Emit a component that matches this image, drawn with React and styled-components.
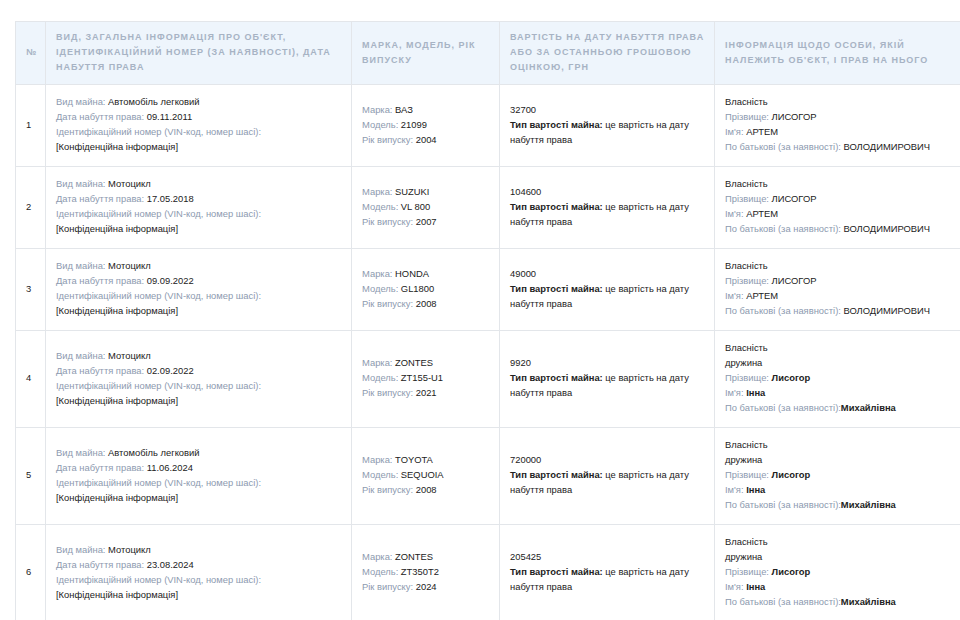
import React from "react";
import styled, { createGlobalStyle } from "styled-components";

const Global = createGlobalStyle`
  html, body { margin: 0; padding: 0; background: #fff; }
  body { overflow: hidden; font-family: "Liberation Sans", Arial, sans-serif; }
`;

const Page = styled.div`
  padding: 21px 0 0 15px;
  width: 1100px;
`;

const Table = styled.table`
  border-collapse: collapse;
  table-layout: fixed;
  width: 966px;
  border: 1px solid #e3e6ea;
`;

const Head = styled.th`
  background: #eef5fc;
  border: 1px solid #e3e6ea;
  padding: 8px 10px 9px;
  text-align: left;
  vertical-align: middle;
  font-size: 9px;
  line-height: 15px;
  font-weight: 700;
  letter-spacing: 1px;
  text-transform: uppercase;
  white-space: nowrap;
  color: #a7b3c4;
`;

const Cell = styled.td`
  border: 1px solid #e3e6ea;
  padding: 9px 10px 12px;
  vertical-align: middle;
  font-size: 9.4px;
  line-height: 15px;
  color: #222;
`;

const Line = styled.div`
  white-space: ${(p) => (p.$nowrap ? "nowrap" : "normal")};
`;

const Label = styled.span`
  color: #8d9aaf;
`;

const Value = styled.span`
  color: #222;
  font-weight: ${(p) => (p.$bold ? 700 : 400)};
`;

const Strong = styled.b`
  font-weight: 700;
  color: #222;
`;

const rows = [
  { n: 1, kind: "Автомобіль легковий", date: "09.11.2011", brand: "ВАЗ", model: "21099", year: "2004", cost: "32700", owner: "self" },
  { n: 2, kind: "Мотоцикл", date: "17.05.2018", brand: "SUZUKI", model: "VL 800", year: "2007", cost: "104600", owner: "self" },
  { n: 3, kind: "Мотоцикл", date: "09.09.2022", brand: "HONDA", model: "GL1800", year: "2008", cost: "49000", owner: "self" },
  { n: 4, kind: "Мотоцикл", date: "02.09.2022", brand: "ZONTES", model: "ZT155-U1", year: "2021", cost: "9920", owner: "wife" },
  { n: 5, kind: "Автомобіль легковий", date: "11.06.2024", brand: "TOYOTA", model: "SEQUOIA", year: "2008", cost: "720000", owner: "wife" },
  { n: 6, kind: "Мотоцикл", date: "23.08.2024", brand: "ZONTES", model: "ZT350T2", year: "2024", cost: "205425", owner: "wife" },
];

function Owner({ type }) {
  if (type === "self") {
    return (
      <>
        <Line>Власність</Line>
        <Line><Label>Прізвище: </Label><Value>ЛИСОГОР</Value></Line>
        <Line><Label>Ім'я: </Label><Value>АРТЕМ</Value></Line>
        <Line $nowrap><Label>По батькові (за наявності): </Label><Value>ВОЛОДИМИРОВИЧ</Value></Line>
      </>
    );
  }
  return (
    <>
      <Line>Власність</Line>
      <Line>дружина</Line>
      <Line><Label>Прізвище: </Label><Value $bold>Лисогор</Value></Line>
      <Line><Label>Ім'я: </Label><Value $bold>Інна</Value></Line>
      <Line $nowrap><Label>По батькові (за наявності):</Label><Value $bold>Михайлівна</Value></Line>
    </>
  );
}

export default function App() {
  return (
    <Page>
      <Global />
      <Table>
        <colgroup>
          <col style={{ width: 30 }} />
          <col style={{ width: 306 }} />
          <col style={{ width: 148 }} />
          <col style={{ width: 215 }} />
          <col style={{ width: 267 }} />
        </colgroup>
        <thead>
          <tr>
            <Head>№</Head>
            <Head>
              Вид, загальна інформація про об'єкт,<br />
              ідентифікаційний номер (за наявності), дата<br />
              набуття права
            </Head>
            <Head>
              Марка, модель, рік<br />
              випуску
            </Head>
            <Head>
              Вартість на дату набуття права<br />
              або за останньою грошовою<br />
              оцінкою, грн
            </Head>
            <Head>
              Інформація щодо особи, якій<br />
              належить об'єкт, і прав на нього
            </Head>
          </tr>
        </thead>
        <tbody>
          {rows.map((r) => (
            <tr key={r.n}>
              <Cell>{r.n}</Cell>
              <Cell>
                <Line><Label>Вид майна: </Label><Value>{r.kind}</Value></Line>
                <Line><Label>Дата набуття права: </Label><Value>{r.date}</Value></Line>
                <Line><Label>Ідентифікаційний номер (VIN-код, номер шасі):</Label></Line>
                <Line>[Конфіденційна інформація]</Line>
              </Cell>
              <Cell>
                <Line><Label>Марка: </Label><Value>{r.brand}</Value></Line>
                <Line><Label>Модель: </Label><Value>{r.model}</Value></Line>
                <Line><Label>Рік випуску: </Label><Value>{r.year}</Value></Line>
              </Cell>
              <Cell>
                <Line>{r.cost}</Line>
                <Line><Strong>Тип вартості майна:</Strong> це вартість на дату набуття права</Line>
              </Cell>
              <Cell>
                <Owner type={r.owner} />
              </Cell>
            </tr>
          ))}
        </tbody>
      </Table>
    </Page>
  );
}
